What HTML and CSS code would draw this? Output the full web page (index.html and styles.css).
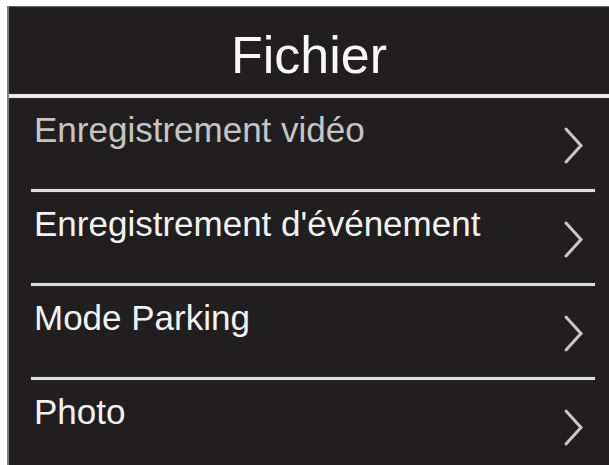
FILE: index.html
```html
<!DOCTYPE html>
<html lang="fr">
<head>
<meta charset="utf-8">
<title>Fichier</title>
<link rel="stylesheet" href="styles.css">
</head>
<body>
<div class="panel">
  <header class="header"><h1 class="title">Fichier</h1></header>
  <div class="header-rule"></div>
  <ul class="menu">
    <li class="item dim"><span class="label">Enregistrement vidéo</span><svg class="chev" viewBox="0 0 22 40" width="22" height="40"><polyline points="3,3 18,19.5 3,36" /></svg></li>
    <li class="sep"></li>
    <li class="item"><span class="label">Enregistrement d'événement</span><svg class="chev" viewBox="0 0 22 40" width="22" height="40"><polyline points="3,3 18,19.5 3,36" /></svg></li>
    <li class="sep"></li>
    <li class="item"><span class="label">Mode Parking</span><svg class="chev" viewBox="0 0 22 40" width="22" height="40"><polyline points="3,3 18,19.5 3,36" /></svg></li>
    <li class="sep"></li>
    <li class="item last"><span class="label">Photo</span><svg class="chev" viewBox="0 0 22 40" width="22" height="40"><polyline points="3,3 18,19.5 3,36" /></svg></li>
  </ul>
</div>
</body>
</html>
```
FILE: styles.css
```css
html, body {
  margin: 0;
  padding: 0;
  background: #ffffff;
  height: 100%;
  overflow: hidden;
}
body {
  font-family: "Liberation Sans", Arial, sans-serif;
}
.panel {
  margin: 6px 0 0 7px;
  height: 459px;
  background: #201e1f;
  border-left: 2px solid #7d7b7c;
  border-top: 1px solid #6a6869;
  box-sizing: border-box;
  display: flex;
  flex-direction: column;
}
.header {
  height: 87px;
  display: flex;
  align-items: center;
  justify-content: center;
}
.title {
  margin: 0;
  font-weight: normal;
  font-size: 52px;
  line-height: 1;
  color: #f7f7f7;
  padding-top: 8px;
}
.header-rule {
  height: 4px;
  background: #e8e8e8;
  box-shadow: 0 0 1px #9a9a9a;
}
.menu {
  list-style: none;
  margin: 0;
  padding: 0 14px 0 22px;
  display: flex;
  flex-direction: column;
}
.item {
  display: flex;
  justify-content: space-between;
  align-items: flex-start;
  height: 91px;
  padding-left: 3px;
}
.item.last { height: 85px; }
.label {
  font-size: 35px;
  line-height: 40px;
  color: #f2f2f2;
  margin-top: 12px;
}
.dim .label { color: #c6c5c5; }
.chev {
  margin-top: 28px;
  margin-right: 10px;
  fill: none;
  stroke: #c9c8c8;
  stroke-width: 3;
  stroke-linecap: round;
  stroke-linejoin: miter;
}
.sep {
  height: 3px;
  background: #dcdcdc;
  box-shadow: 0 0 1px #8a8a8a;
}
```
